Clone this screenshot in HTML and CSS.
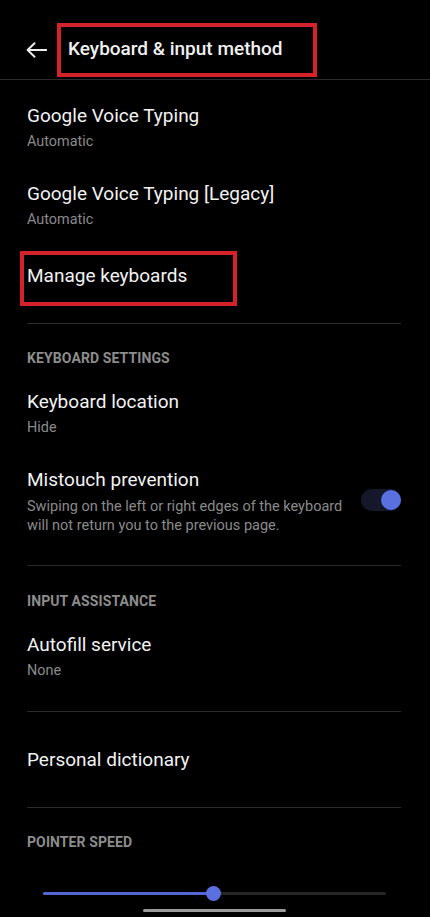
FILE: index.html
```html
<!DOCTYPE html>
<html lang="en">
<head>
<meta charset="utf-8">
<title>Keyboard &amp; input method</title>
<link rel="stylesheet" href="styles.css">
</head>
<body>
<div class="screen">
  <header class="appbar">
    <svg class="back" width="21" height="16" viewBox="0 0 21 16" aria-hidden="true">
      <path d="M20.5 8H1.8M8.5 1.2L1.6 8l6.9 6.8" fill="none" stroke="#ededed" stroke-width="1.9" stroke-linecap="round" stroke-linejoin="round"/>
    </svg>
    <div class="title-box"><h1 class="title">Keyboard &amp; input method</h1></div>
  </header>

  <main class="list">
    <div class="item first">
      <div class="item-title">Google Voice Typing</div>
      <div class="item-sub">Automatic</div>
    </div>
    <div class="item">
      <div class="item-title">Google Voice Typing [Legacy]</div>
      <div class="item-sub">Automatic</div>
    </div>
    <div class="item manage">
      <div class="item-title">Manage keyboards</div>
      <span class="highlight"></span>
    </div>
    <hr class="divider">

    <div class="section">KEYBOARD SETTINGS</div>
    <div class="item">
      <div class="item-title">Keyboard location</div>
      <div class="item-sub">Hide</div>
    </div>
    <div class="item switch-row">
      <div class="item-text">
        <div class="item-title">Mistouch prevention</div>
        <div class="item-desc">Swiping on the left or right edges of the keyboard will not return you to the previous page.</div>
      </div>
      <div class="toggle"><span class="knob"></span></div>
    </div>
    <hr class="divider">

    <div class="section input">INPUT ASSISTANCE</div>
    <div class="item autofill">
      <div class="item-title">Autofill service</div>
      <div class="item-sub">None</div>
    </div>
    <hr class="divider">
    <div class="item single">
      <div class="item-title">Personal dictionary</div>
    </div>
    <hr class="divider">

    <div class="section">POINTER SPEED</div>
    <div class="slider">
      <div class="track"><div class="fill" style="width: 49.6%"></div><span class="thumb" style="left: 49.6%"></span></div>
    </div>
  </main>
  <div class="home-indicator"></div>
</div>
</body>
</html>
```

FILE: styles.css
```css
* { box-sizing: border-box; }
html, body { margin: 0; padding: 0; background: #000; }
body {
  font-family: Roboto, "Noto Sans", "Liberation Sans", sans-serif;
  color: #eeeeee;
  -webkit-font-smoothing: antialiased;
}
.screen {
  position: relative;
  width: 430px;
  height: 917px;
  overflow: hidden;
  background: #000;
}

.appbar {
  display: flex;
  align-items: center;
  height: 80px;
  padding-top: 20px;
  border-bottom: 1px solid #2b2b2b;
}
.back {
  margin-left: 26px;
  flex: none;
}
.title-box {
  margin-left: 10px;
  width: 260px;
  height: 54px;
  border: 4px solid #d4222b;
  display: flex;
  align-items: center;
  padding-left: 7px;
  padding-bottom: 3px;
}
.title {
  margin: 0;
  font-size: 19px;
  font-weight: 500;
  color: #f0f0f0;
  letter-spacing: 0;
  white-space: nowrap;
}

.list {
  padding-top: 10px;
}
.item {
  position: relative;
  padding: 13px 29px 13px 27px;
}
.item-title {
  font-size: 19px;
  line-height: 26px;
  color: #f2f2f2;
  white-space: nowrap;
}
.item-sub {
  font-size: 14.4px;
  line-height: 26px;
  color: #8a8a8a;
}
.item.manage {
  padding-top: 17px;
  padding-bottom: 34px;
}
.highlight {
  position: absolute;
  left: 20px;
  top: 5px;
  width: 217px;
  height: 55px;
  border: 4px solid #d4222b;
}

.divider {
  margin: 0 29px 0 27px;
  border: 0;
  border-top: 1px solid #2a2a2a;
  height: 0;
}

.section {
  padding: 24px 27px 8px;
  font-size: 14px;
  line-height: 20px;
  font-weight: 700;
  color: #8c8c8c;
  letter-spacing: 0.1px;
}
.section.input {
  padding-top: 25px;
  padding-bottom: 7px;
}

.switch-row {
  display: flex;
  align-items: center;
  padding-bottom: 30px;
}
.item-text {
  flex: 1;
  min-width: 0;
}
.item-desc {
  margin-top: 4px;
  max-width: 325px;
  font-size: 14.5px;
  line-height: 19px;
  color: #8a8a8a;
}
.toggle {
  position: relative;
  flex: none;
  width: 40px;
  height: 22px;
  border-radius: 11px;
  background: #15172a;
  margin-left: 2px;
  margin-top: -2px;
}
.knob {
  position: absolute;
  right: 0;
  top: 1px;
  width: 20px;
  height: 20px;
  border-radius: 50%;
  background: #5a6fe0;
}

.item.autofill {
  padding-top: 14px;
  padding-bottom: 27px;
}
.item.single {
  padding-top: 35px;
  padding-bottom: 34px;
}

.slider {
  padding: 32px 44px 0 43px;
}
.track {
  position: relative;
  height: 3px;
  border-radius: 2px;
  background: #262626;
}
.fill {
  height: 3px;
  border-radius: 2px;
  background: #5466cf;
}
.thumb {
  position: absolute;
  top: 50%;
  width: 15px;
  height: 15px;
  margin: -7.5px 0 0 -7.5px;
  border-radius: 50%;
  background: #5a6fe0;
}

.home-indicator {
  position: absolute;
  left: 143px;
  bottom: 5px;
  width: 143px;
  height: 3px;
  border-radius: 2px;
  background: #9a9a9a;
}
```
